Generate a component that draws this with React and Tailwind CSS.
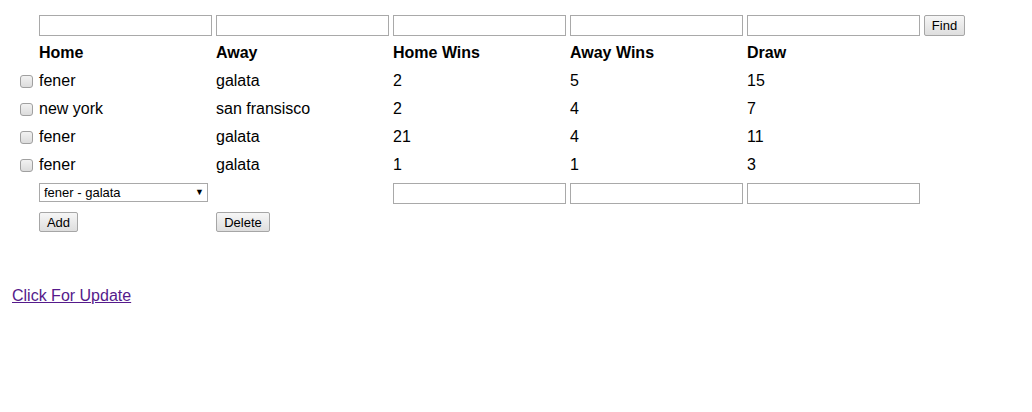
import { useState } from 'react'

const matches = [
  { home: 'fener', away: 'galata', homeWins: 2, awayWins: 5, draw: 15 },
  { home: 'new york', away: 'san fransisco', homeWins: 2, awayWins: 4, draw: 7 },
  { home: 'fener', away: 'galata', homeWins: 21, awayWins: 4, draw: 11 },
  { home: 'fener', away: 'galata', homeWins: 1, awayWins: 1, draw: 3 },
]

const headers = ['Home', 'Away', 'Home Wins', 'Away Wins', 'Draw']

const grid = 'grid grid-cols-[23px_173px_173px_173px_173px_173px_auto] gap-x-1'
const field = 'block h-[21px] w-[173px] border border-[#a9a9a9] bg-white px-1 text-[13px] outline-none'
const button =
  'block h-[20px] rounded-[2px] border border-[#a6a6a6] bg-gradient-to-b from-[#f6f6f6] to-[#dedede] px-[6px] text-[13px] leading-none text-black'

function Checkbox() {
  return (
    <input
      type="checkbox"
      className="ml-[8px] block h-[13px] w-[13px] appearance-none rounded-[3px] border border-[#a0a0a0] bg-gradient-to-b from-[#f2f2f2] to-[#dcdcdc]"
    />
  )
}

export default function App() {
  const [pick, setPick] = useState('fener - galata')

  return (
    <div className="min-h-[412px] bg-white pl-[12px] pt-[15px] font-['Liberation_Sans',Arial,sans-serif] text-[16px] text-black">
      <div className={`${grid} h-[21px] items-center`}>
        <div />
        {headers.map((h) => (
          <input key={h} className={field} />
        ))}
        <button className={`${button} h-[21px] w-[41px]`}>Find</button>
      </div>

      <div className={`${grid} mt-[3px] h-[28px] items-center font-bold`}>
        <div />
        {headers.map((h) => (
          <div key={h}>{h}</div>
        ))}
      </div>

      {matches.map((m, i) => (
        <div key={i} className={`${grid} h-[28px] items-center`}>
          <div className="flex items-center">
            <Checkbox />
          </div>
          <div>{m.home}</div>
          <div>{m.away}</div>
          <div>{m.homeWins}</div>
          <div>{m.awayWins}</div>
          <div>{m.draw}</div>
        </div>
      ))}

      <div className={`${grid} mt-[4px] h-[21px] items-start`}>
        <div />
        <div className="relative h-[19px] w-[169px]">
          <select
            value={pick}
            onChange={(e) => setPick(e.target.value)}
            className="block h-[19px] w-[169px] appearance-none border border-[#a9a9a9] bg-white pl-[4px] text-[13px] leading-[17px] outline-none"
          >
            <option>fener - galata</option>
            <option>new york - san fransisco</option>
          </select>
          <span className="pointer-events-none absolute right-[4px] top-[3px] text-[9px] leading-[12px]">▼</span>
        </div>
        <div />
        <input className={field} />
        <input className={field} />
        <input className={field} />
      </div>

      <div className={`${grid} mt-[8px] h-[20px] items-start`}>
        <div />
        <div>
          <button className={`${button} w-[39px]`}>Add</button>
        </div>
        <div>
          <button className={`${button} w-[54px]`}>Delete</button>
        </div>
      </div>

      <div className="mt-[55px] h-[18px] leading-[18px]">
        <a href="#" className="text-[#551a8b] underline">
          Click For Update
        </a>
      </div>
    </div>
  )
}
